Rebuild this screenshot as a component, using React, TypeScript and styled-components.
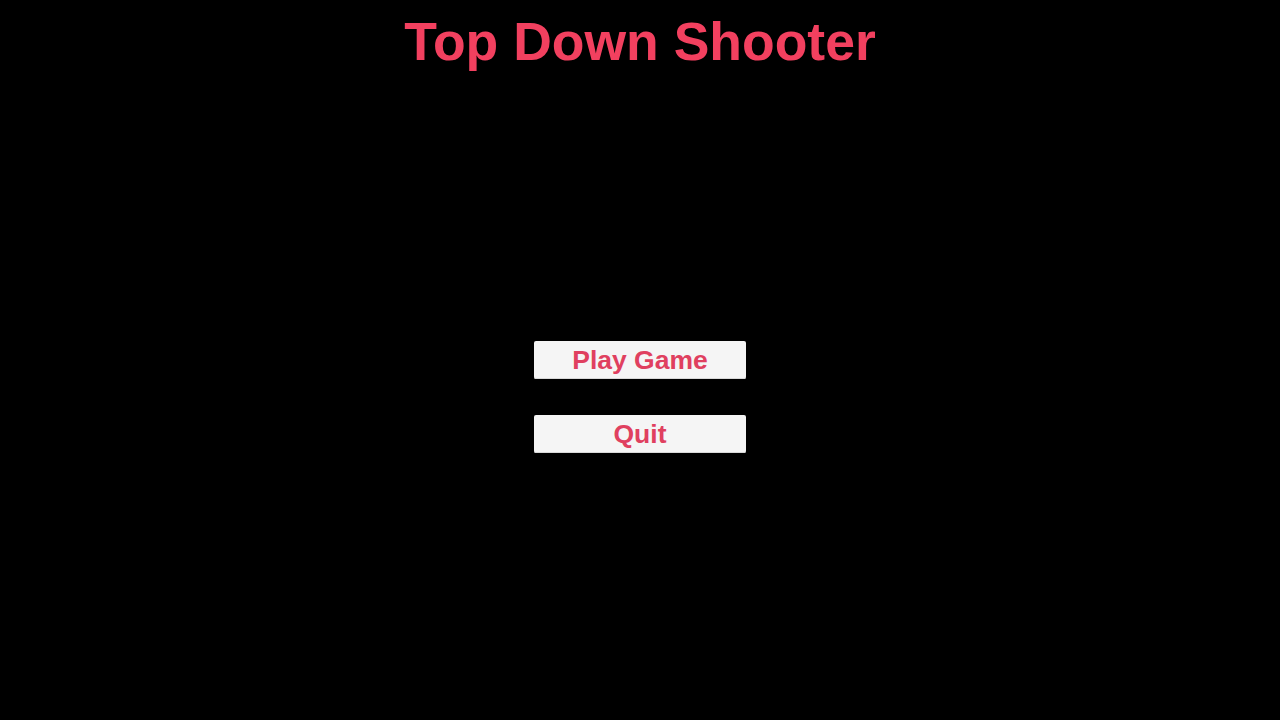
import React from "react";
import styled, { createGlobalStyle } from "styled-components";

const Global = createGlobalStyle`
  html, body { margin: 0; padding: 0; background: #000; }
  body { font-family: "Liberation Sans", Arial, sans-serif; }
`;

const Screen = styled.div`
  width: 1280px;
  height: 720px;
  background: #000;
  display: flex;
  flex-direction: column;
  align-items: center;
  overflow: hidden;
`;

const Title = styled.h1`
  margin: 0;
  padding-top: 15px;
  font-size: 53.5px;
  line-height: 54px;
  font-weight: 700;
  color: #f2405f;
`;

const Menu = styled.div`
  margin-top: 272px;
  display: flex;
  flex-direction: column;
  gap: 36px;
`;

const MenuButton = styled.button`
  width: 212px;
  height: 38px;
  padding: 0;
  border: none;
  border-radius: 2px;
  background: #f5f5f5;
  box-shadow: inset 0 -1px 0 #d8d8d8;
  color: #e0405f;
  font-family: "Liberation Sans", Arial, sans-serif;
  font-weight: 700;
  font-size: 26.5px;
  line-height: 38px;
  cursor: pointer;
`;

export default function App() {
  return (
    <Screen>
      <Global />
      <Title>Top Down Shooter</Title>
      <Menu>
        <MenuButton>Play Game</MenuButton>
        <MenuButton>Quit</MenuButton>
      </Menu>
    </Screen>
  );
}
